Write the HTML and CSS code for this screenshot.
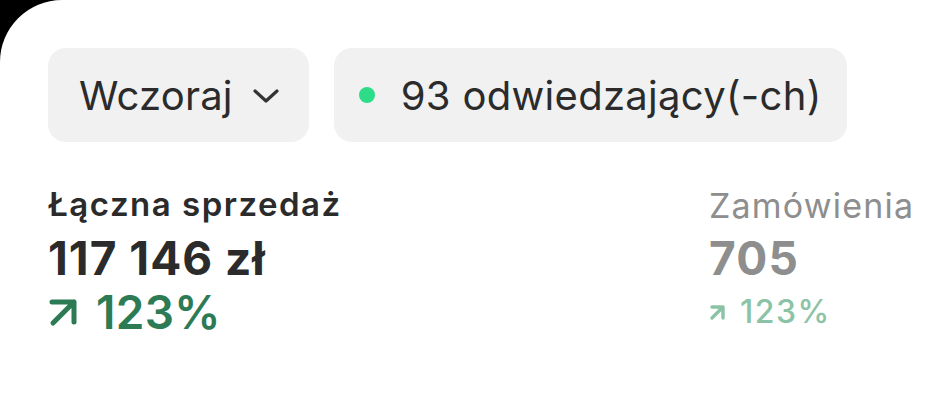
FILE: index.html
```html
<!DOCTYPE html>
<html lang="pl">
<head>
<meta charset="utf-8">
<link rel="stylesheet" href="styles.css">
</head>
<body>
<div class="card">
  <div class="chips">
    <div class="chip chip-period">
      <span class="chip-text">Wczoraj</span>
      <svg class="chevron" width="26" height="14" viewBox="0 0 26 14"><path d="M2 2 L13 12 L24 2" fill="none" stroke="#333" stroke-width="3.2" stroke-linecap="round" stroke-linejoin="round"/></svg>
    </div>
    <div class="chip chip-visitors">
      <span class="dot"></span>
      <span class="chip-text">93 odwiedzający(-ch)</span>
    </div>
  </div>
  <div class="stats">
    <div class="stat stat-main">
      <div class="stat-label">Łączna sprzedaż</div>
      <div class="stat-value">117 146 zł</div>
      <div class="stat-change">
        <svg class="arrow" width="30" height="30" viewBox="0 0 30 30"><path d="M4 5 H26 V25 M26 5 L5 26" fill="none" stroke="#2c7b55" stroke-width="5" stroke-linecap="round" stroke-linejoin="round"/></svg>
        <span>123%</span>
      </div>
    </div>
    <div class="stat stat-side">
      <div class="stat-label">Zamówienia</div>
      <div class="stat-value">705</div>
      <div class="stat-change">
        <svg class="arrow" width="17" height="17" viewBox="0 0 17 17"><path d="M3 3 H14 V14 M14 3 L3 14" fill="none" stroke="#8cc3a6" stroke-width="3.4" stroke-linecap="round" stroke-linejoin="round"/></svg>
        <span>123%</span>
      </div>
    </div>
  </div>
</div>
</body>
</html>
```
FILE: styles.css
```css
html, body {
  margin: 0;
  padding: 0;
  background: #000;
  height: 100%;
}
body {
  font-family: Inter, "Noto Sans", sans-serif;
  color: #2b2b2b;
}
.card {
  background: #fff;
  border-top-left-radius: 62px;
  min-height: 100%;
  box-sizing: border-box;
  padding: 48px 0 0 48px;
  overflow: hidden;
}
.chips {
  display: flex;
  gap: 25px;
}
.chip {
  display: flex;
  align-items: center;
  height: 94px;
  box-sizing: border-box;
  background: #f1f1f2;
  border-radius: 18px;
  font-size: 40px;
  letter-spacing: 0.2px;
}
.chip-period {
  padding: 0 30px 0 31px;
  gap: 20px;
}
.chip-visitors {
  padding: 0 25px 0 25px;
  gap: 26px;
}
.chip-visitors .chip-text {
  letter-spacing: 0.3px;
}
.chevron {
  margin-top: 2px;
}
.dot {
  width: 16px;
  height: 16px;
  border-radius: 50%;
  background: #2ddc87;
}
.stats {
  display: flex;
  margin-top: 35px;
}
.stat-main {
  width: 661px;
}
.stat-label {
  font-size: 33px;
  line-height: 54px;
  letter-spacing: 1.5px;
}
.stat-main .stat-label {
  font-weight: 600;
}
.stat-value {
  font-size: 46px;
  font-weight: 700;
  line-height: 54px;
  letter-spacing: 1px;
}
.stat-change {
  display: flex;
  align-items: center;
  gap: 18px;
  font-size: 46px;
  font-weight: 600;
  line-height: 54px;
  color: #2c7b55;
  letter-spacing: 0.3px;
}
.stat-side {
  color: #8e8e8e;
}
.stat-side .stat-label {
  font-size: 34px;
  letter-spacing: 1.2px;
  padding-top: 3px;
  line-height: 51px;
}
.stat-side .stat-value {
  letter-spacing: 1.2px;
}
.stat-side .stat-change {
  color: #8cc3a6;
  font-size: 32px;
  font-weight: 500;
  letter-spacing: 1.5px;
  gap: 14px;
}
```
